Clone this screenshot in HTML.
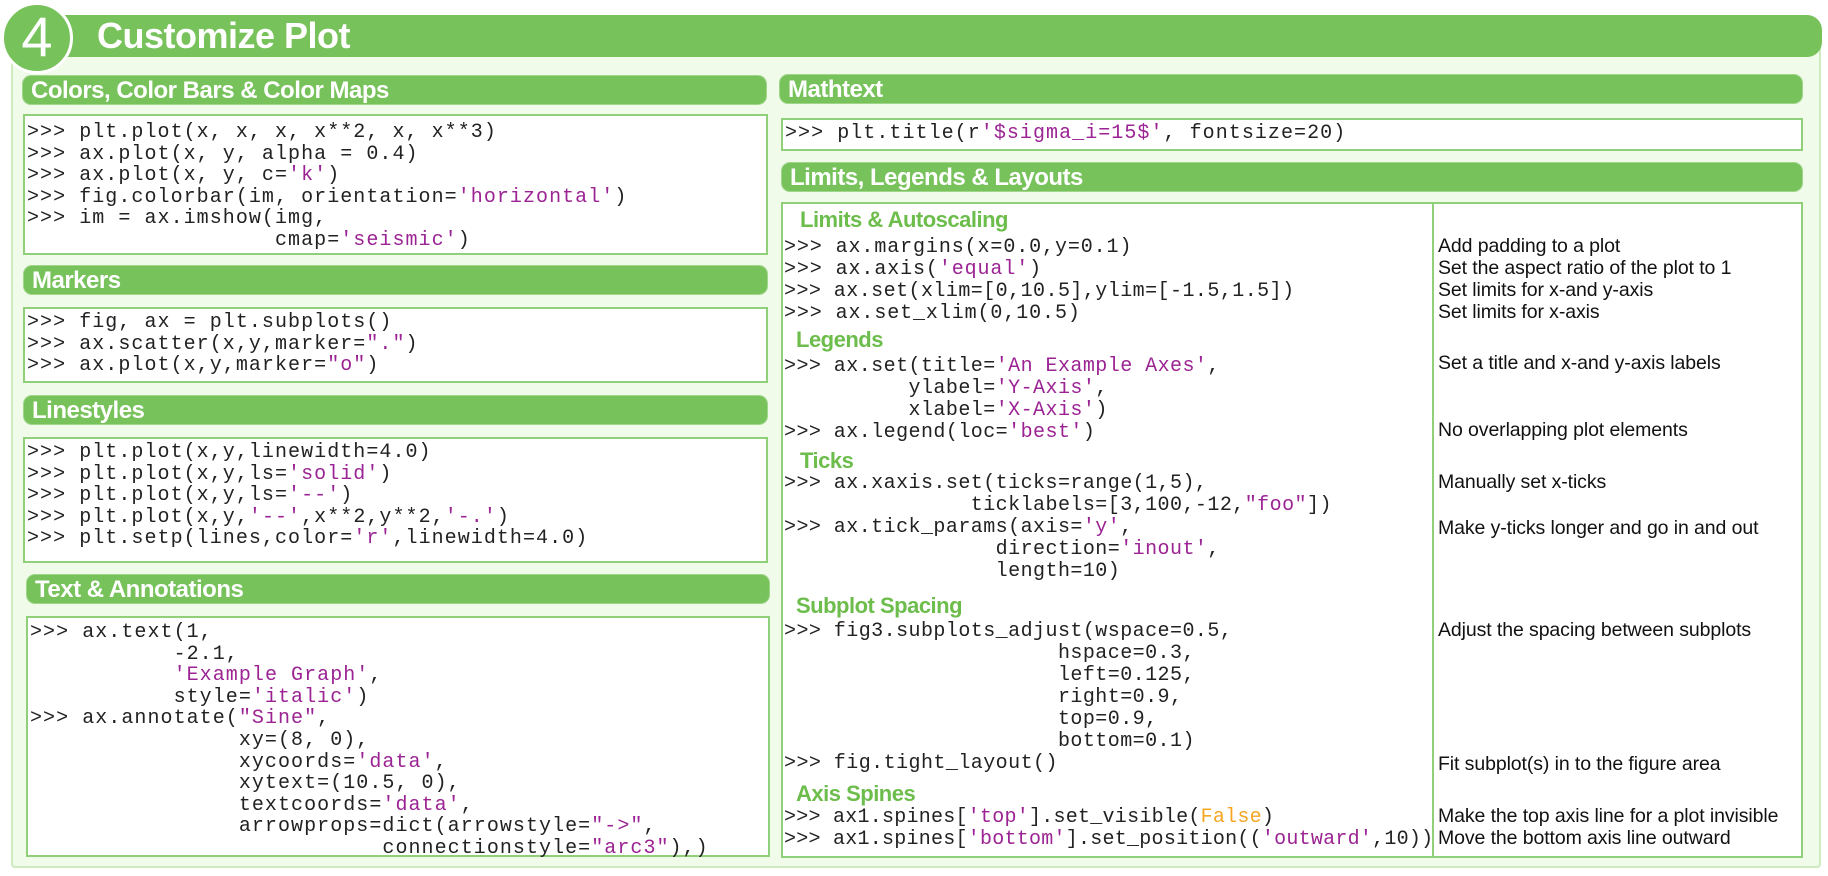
<!DOCTYPE html>
<html><head><meta charset="utf-8"><style>
*{margin:0;padding:0;box-sizing:border-box}
body{width:1828px;height:876px;background:#fff;position:relative;overflow:hidden;font-family:"Liberation Sans",sans-serif}
.a{position:absolute}
.frame{left:11px;top:40px;width:1810px;height:828px;background:#f0fbea;border:2px solid #cdeac0;border-radius:0 0 4px 4px}
.bar{left:40px;top:15px;width:1782px;height:42px;background:#78c25c;border-radius:0 15px 15px 0}
.circ{left:1px;top:2px;width:72px;height:72px;border-radius:50%;background:#78c25c;border:3px solid #fff;color:#fff;font-size:56px;line-height:64px;text-align:center}
.title{left:97px;top:14px;color:#fff;font-weight:bold;font-size:36px;line-height:44px;letter-spacing:-0.5px}
.h{background:#78c25c;border-radius:9px;color:#fff;font-weight:bold;font-size:24px;line-height:30px;padding-left:8px;height:30px;letter-spacing:-0.5px;border:1px solid #9fd68a}
.box{background:#fff;border:2px solid #8fd079}
pre{font-family:"Liberation Mono",monospace;font-size:20px;letter-spacing:1.05px;line-height:21.6px;color:#222}
.s{color:#9b2393}
.o{color:#f5a623}
.c{position:absolute;font-family:"Liberation Mono",monospace;font-size:20px;letter-spacing:0.45px;color:#222;white-space:pre;line-height:22px}
.d{position:absolute;left:1438px;font-size:19.5px;color:#111;white-space:pre;line-height:22px;letter-spacing:-0.1px}
.g{position:absolute;color:#6dbd4c;font-weight:bold;font-size:22px;line-height:24px;letter-spacing:-0.5px}
</style></head><body>
<div class="a frame"></div>
<div class="a bar"></div>
<div class="a circ">4</div>
<div class="a title">Customize Plot</div>

<div class="a h" style="left:22px;top:75px;width:745px">Colors, Color Bars &amp; Color Maps</div>
<div class="a box" style="left:23px;top:114px;width:745px;height:141px"><pre style="padding:6px 0 0 2px">&gt;&gt;&gt; plt.plot(x, x, x, x**2, x, x**3)
&gt;&gt;&gt; ax.plot(x, y, alpha = 0.4)
&gt;&gt;&gt; ax.plot(x, y, c=<span class="s">'k'</span>)
&gt;&gt;&gt; fig.colorbar(im, orientation=<span class="s">'horizontal'</span>)
&gt;&gt;&gt; im = ax.imshow(img,
                   cmap=<span class="s">'seismic'</span>)</pre></div>

<div class="a h" style="left:23px;top:265px;width:745px">Markers</div>
<div class="a box" style="left:23px;top:307px;width:745px;height:76px"><pre style="padding:3px 0 0 2px">&gt;&gt;&gt; fig, ax = plt.subplots()
&gt;&gt;&gt; ax.scatter(x,y,marker=<span class="s">"."</span>)
&gt;&gt;&gt; ax.plot(x,y,marker=<span class="s">"o"</span>)</pre></div>

<div class="a h" style="left:23px;top:395px;width:745px">Linestyles</div>
<div class="a box" style="left:23px;top:437px;width:745px;height:126px"><pre style="padding:3px 0 0 2px">&gt;&gt;&gt; plt.plot(x,y,linewidth=4.0)
&gt;&gt;&gt; plt.plot(x,y,ls=<span class="s">'solid'</span>)
&gt;&gt;&gt; plt.plot(x,y,ls=<span class="s">'--'</span>)
&gt;&gt;&gt; plt.plot(x,y,<span class="s">'--'</span>,x**2,y**2,<span class="s">'-.'</span>)
&gt;&gt;&gt; plt.setp(lines,color=<span class="s">'r'</span>,linewidth=4.0)</pre></div>

<div class="a h" style="left:26px;top:574px;width:744px">Text &amp; Annotations</div>
<div class="a box" style="left:26px;top:616px;width:744px;height:241px"><pre style="padding:4px 0 0 2px">&gt;&gt;&gt; ax.text(1,
           -2.1,
           <span class="s">'Example Graph'</span>,
           style=<span class="s">'italic'</span>)
&gt;&gt;&gt; ax.annotate(<span class="s">"Sine"</span>,
                xy=(8, 0),
                xycoords=<span class="s">'data'</span>,
                xytext=(10.5, 0),
                textcoords=<span class="s">'data'</span>,
                arrowprops=dict(arrowstyle=<span class="s">"-&gt;"</span>,
                           connectionstyle=<span class="s">"arc3"</span>),)</pre></div>

<div class="a h" style="left:779px;top:74px;width:1024px">Mathtext</div>
<div class="a box" style="left:781px;top:118px;width:1022px;height:33px"><pre style="padding:3px 0 0 2px;letter-spacing:1.05px">&gt;&gt;&gt; plt.title(r<span class="s">'$sigma_i=15$'</span>, fontsize=20)</pre></div>

<div class="a h" style="left:781px;top:162px;width:1022px">Limits, Legends &amp; Layouts</div>
<div class="a box" style="left:781px;top:202px;width:1022px;height:656px"></div>
<div class="a" style="left:1432px;top:203px;width:2px;height:654px;background:#8fd079"></div>

<div class="g" style="left:800px;top:208px">Limits &amp; Autoscaling</div>
<div class="c" style="left:784px;top:237px;letter-spacing:0.9px">&gt;&gt;&gt; ax.margins(x=0.0,y=0.1)</div>
<div class="c" style="left:784px;top:259px;letter-spacing:0.9px">&gt;&gt;&gt; ax.axis(<span class="s">'equal'</span>)</div>
<div class="c" style="left:784px;top:281px">&gt;&gt;&gt; ax.set(xlim=[0,10.5],ylim=[-1.5,1.5])</div>
<div class="c" style="left:784px;top:303px;letter-spacing:0.9px">&gt;&gt;&gt; ax.set_xlim(0,10.5)</div>
<div class="d" style="top:235px">Add padding to a plot</div>
<div class="d" style="top:257px">Set the aspect ratio of the plot to 1</div>
<div class="d" style="top:279px">Set limits for x-and y-axis</div>
<div class="d" style="top:301px">Set limits for x-axis</div>

<div class="g" style="left:796px;top:328px">Legends</div>
<div class="c" style="left:784px;top:356px">&gt;&gt;&gt; ax.set(title=<span class="s">'An Example Axes'</span>,
          ylabel=<span class="s">'Y-Axis'</span>,
          xlabel=<span class="s">'X-Axis'</span>)
&gt;&gt;&gt; ax.legend(loc=<span class="s">'best'</span>)</div>
<div class="d" style="top:352px">Set a title and x-and y-axis labels</div>
<div class="d" style="top:419px">No overlapping plot elements</div>

<div class="g" style="left:800px;top:449px">Ticks</div>
<div class="c" style="left:784px;top:473px">&gt;&gt;&gt; ax.xaxis.set(ticks=range(1,5),
               ticklabels=[3,100,-12,<span class="s">"foo"</span>])
&gt;&gt;&gt; ax.tick_params(axis=<span class="s">'y'</span>,
                 direction=<span class="s">'inout'</span>,
                 length=10)</div>
<div class="d" style="top:471px">Manually set x-ticks</div>
<div class="d" style="top:517px">Make y-ticks longer and go in and out</div>

<div class="g" style="left:796px;top:594px">Subplot Spacing</div>
<div class="c" style="left:784px;top:621px">&gt;&gt;&gt; fig3.subplots_adjust(wspace=0.5,
                      hspace=0.3,
                      left=0.125,
                      right=0.9,
                      top=0.9,
                      bottom=0.1)
&gt;&gt;&gt; fig.tight_layout()</div>
<div class="d" style="top:619px">Adjust the spacing between subplots</div>
<div class="d" style="top:753px">Fit subplot(s) in to the figure area</div>

<div class="g" style="left:796px;top:782px">Axis Spines</div>
<div class="c" style="left:784px;top:807px;letter-spacing:0.25px">&gt;&gt;&gt; ax1.spines[<span class="s">'top'</span>].set_visible(<span class="o">False</span>)
&gt;&gt;&gt; ax1.spines[<span class="s">'bottom'</span>].set_position((<span class="s">'outward'</span>,10))</div>
<div class="d" style="top:805px">Make the top axis line for a plot invisible</div>
<div class="d" style="top:827px">Move the bottom axis line outward</div>
</body></html>
